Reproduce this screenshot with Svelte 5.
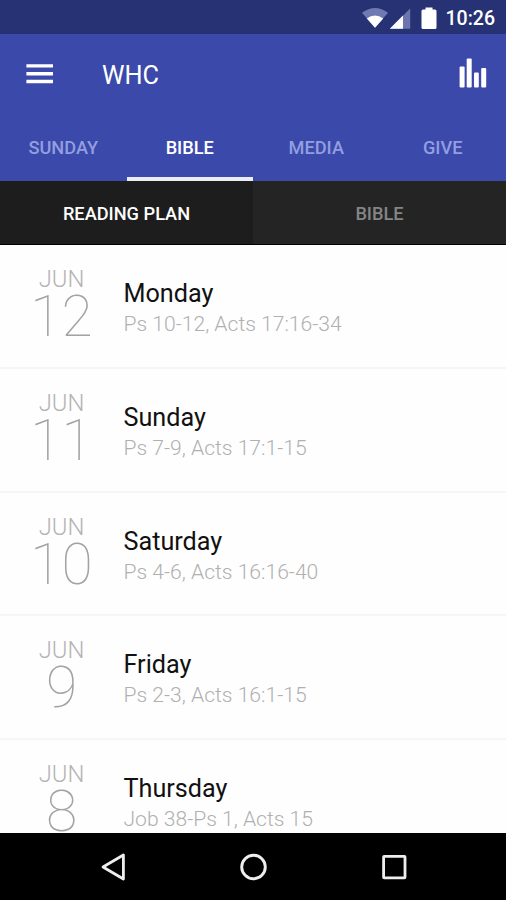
<script lang="ts">
    let tabs = ['SUNDAY', 'BIBLE', 'MEDIA', 'GIVE'];
    let subTabs = ['READING PLAN', 'BIBLE'];

    let activeTab = $state(1);
    let activeSubTab = $state(0);

    let readings = [
        { month: 'JUN', date: 12, day: 'Monday', passage: 'Ps 10-12, Acts 17:16-34' },
        { month: 'JUN', date: 11, day: 'Sunday', passage: 'Ps 7-9, Acts 17:1-15' },
        { month: 'JUN', date: 10, day: 'Saturday', passage: 'Ps 4-6, Acts 16:16-40' },
        { month: 'JUN', date: 9, day: 'Friday', passage: 'Ps 2-3, Acts 16:1-15' },
        { month: 'JUN', date: 8, day: 'Thursday', passage: 'Job 38-Ps 1, Acts 15' }
    ];
</script>

<div class="screen">
    <div class="status-bar">
        <svg class="status-icons" width="78" height="24" viewBox="0 0 78 24">
            <path d="M0 5.8 Q13 -3.8 26 5.8 L13 20.8 Z" fill="#6f7ab2" />
            <path d="M4.8 11.4 Q13 5.4 21.2 11.4 L13 20.8 Z" fill="#fff" />
            <path d="M48.2 1.5 V21.8 H27.8 Z" fill="#6b76ae" />
            <path d="M41 8.6 V21.8 H27.8 Z" fill="#fff" />
            <path d="M63.5 0.5 h7 v2 h2.5 q1.5 0 1.5 1.5 v16.5 q0 1.5 -1.5 1.5 h-12 q-1.5 0 -1.5 -1.5 V4 q0 -1.5 1.5 -1.5 h2.5 Z" fill="#fff" />
        </svg>
        <span class="clock">10:26</span>
    </div>

    <header class="app-bar">
        <button class="icon-btn" aria-label="Menu">
            <svg width="27" height="20" viewBox="0 0 27 20">
                <path d="M0.4 1.9 H27 M0.4 9.7 H27 M0.4 17.5 H27" stroke="#fff" stroke-width="3.4" />
            </svg>
        </button>
        <h1>WHC</h1>
        <button class="icon-btn" aria-label="Now playing">
            <svg width="28" height="30" viewBox="0 0 28 30" fill="#fff">
                <rect x="0.6" y="7.6" width="5" height="21" rx="1" />
                <rect x="7.7" y="-0.4" width="5" height="29" rx="1" />
                <rect x="15" y="13.6" width="4.8" height="15" rx="1" />
                <rect x="22.2" y="9" width="5" height="19.6" rx="1" />
            </svg>
        </button>
    </header>

    <nav class="tabs">
        {#each tabs as tab, i}
            <button class="tab" class:active={activeTab === i} onclick={() => (activeTab = i)}>{tab}</button>
        {/each}
    </nav>

    <nav class="sub-tabs">
        {#each subTabs as tab, i}
            <button class="sub-tab" class:active={activeSubTab === i} onclick={() => (activeSubTab = i)}>{tab}</button>
        {/each}
    </nav>

    <main class="reading-list">
        {#each readings as item}
            <div class="reading">
                <div class="date">
                    <span class="month">{item.month}</span>
                    <span class="number">{item.date}</span>
                </div>
                <div class="info">
                    <span class="day">{item.day}</span>
                    <span class="passage">{item.passage}</span>
                </div>
            </div>
        {/each}
    </main>

    <footer class="nav-bar">
        <svg width="28" height="30" viewBox="0 0 28 30">
            <path d="M24.4 3 V27 L4 15 Z" fill="none" stroke="#eee" stroke-width="2.8" stroke-linejoin="round" />
        </svg>
        <svg width="28" height="30" viewBox="0 0 28 30">
            <circle cx="14.5" cy="15" r="11.8" fill="none" stroke="#eee" stroke-width="2.9" />
        </svg>
        <svg width="28" height="30" viewBox="0 0 28 30">
            <rect x="4.6" y="4.4" width="21.4" height="21.4" rx="0.6" fill="none" stroke="#eee" stroke-width="2.8" />
        </svg>
    </footer>
</div>

<style>
    :global(body) { margin: 0; background-color: #fff; }

    .screen {
        height: 900px; display: flex; flex-direction: column; overflow: hidden;
        font-family: Roboto, "Noto Sans", sans-serif; background-color: #fefefe;
    }
    button { background: none; border: none; padding: 0; margin: 0; font-family: inherit; cursor: pointer; }
    svg { display: block; overflow: visible; }

    .status-bar {
        flex: none; height: 34px; box-sizing: border-box; padding: 2px 11px 0 0;
        display: flex; justify-content: flex-end; align-items: center; gap: 6px;
        background-color: #273274;
    }
    .status-icons { margin-top: 2px; }
    .clock { font-size: 19.5px; font-weight: 500; color: #fff; line-height: 32px; padding-top: 2px; }

    .app-bar {
        flex: none; height: 79px; box-sizing: border-box; padding: 0 19px 0 26px;
        display: flex; align-items: center; background-color: #3a49aa;
    }
    h1 { flex: 1; margin: 4px 0 0 49px; font-size: 25.3px; font-weight: 400; color: #fff; }

    .tabs { flex: none; height: 68px; display: flex; background-color: #3a49aa; }
    .tab {
        flex: 1; box-sizing: border-box; border-bottom: 4px solid transparent; padding-top: 5px;
        font-size: 18.2px; font-weight: 500; color: #939ee0;
    }
    .tab.active { color: #fff; border-bottom-color: #eaecf6; }

    .sub-tabs { flex: none; height: 64px; display: flex; border-bottom: 1px solid #000; box-sizing: border-box; }
    .sub-tab { flex: 1; font-size: 18.2px; font-weight: 500; color: #858585; background-color: #242424; padding-top: 2px; }
    .sub-tab.active { color: #fff; background-color: #1d1d1d; }

    .reading-list { flex: 1; min-height: 0; overflow: hidden; }
    .reading {
        height: 123.75px; box-sizing: border-box; display: flex;
        border-bottom: 2px solid #f6f6f6;
    }
    .date { width: 123px; box-sizing: border-box; padding: 22px 0 0; display: flex; flex-direction: column; align-items: center; gap: 1px; color: #b4b4b4; }
    .month { font-size: 23.8px; font-weight: 300; line-height: 24px; }
    .number { font-size: 57px; font-weight: 100; line-height: 50px; color: #a2a2a2; }
    .info { padding: 34px 0 0 0.5px; display: flex; flex-direction: column; }
    .day { font-size: 25.2px; line-height: 30px; color: #111; }
    .passage { font-size: 21.1px; font-weight: 300; line-height: 30px; color: #b0b0b0; }

    .nav-bar {
        flex: none; height: 67px; display: flex; justify-content: center; align-items: center; gap: 112px;
        background-color: #000;
    }
</style>
